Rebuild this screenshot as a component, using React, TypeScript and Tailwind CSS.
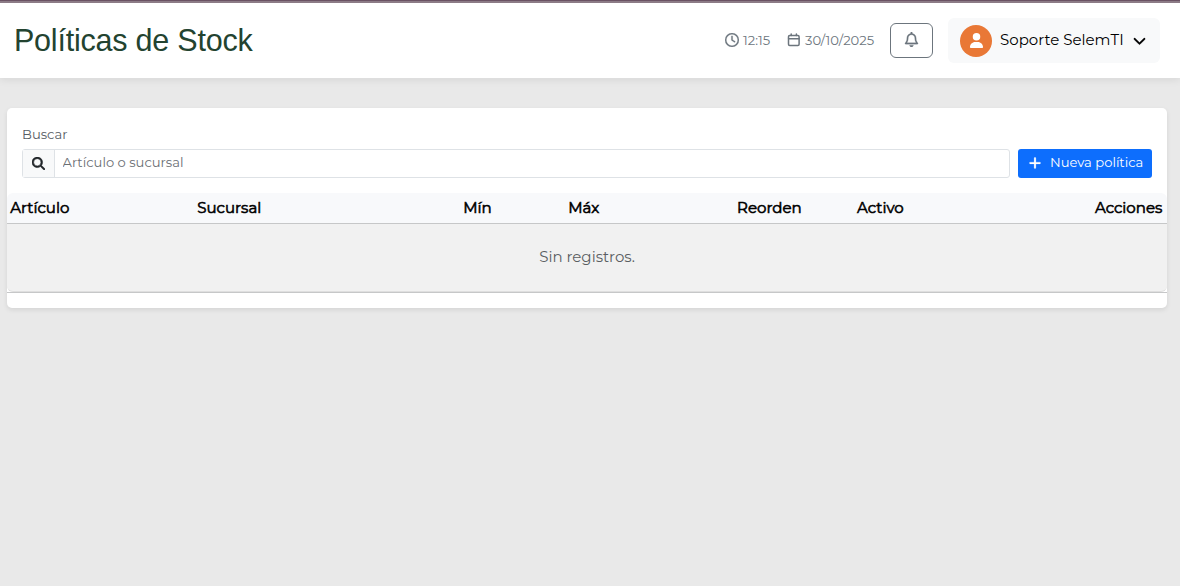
import React from "react";
import { FaRegClock, FaRegBell, FaUser, FaChevronDown, FaMagnifyingGlass, FaPlus } from "react-icons/fa6";

const columns = [
  { name: "Artículo", cell: "w-[187px]" },
  { name: "Sucursal", cell: "w-[266px]" },
  { name: "Mín", cell: "w-[105px]" },
  { name: "Máx", cell: "w-[169px]" },
  { name: "Reorden", cell: "w-[120px]" },
  { name: "Activo", cell: "w-[238px]" },
  { name: "Acciones", cell: "w-[72px]" },
];

function CalendarIcon() {
  return (
    <svg viewBox="0 0 14 14" className="mr-1 mb-px ml-4 size-3.5" fill="none" stroke="currentColor" strokeWidth="1.5" strokeLinecap="round">
      <rect x="1.5" y="2.6" width="10.6" height="9.8" rx="1.2" />
      <path d="M1.6 5.8h10.4M4.2 1v1.6M9.4 1v1.6" />
    </svg>
  );
}

function Header() {
  return (
    <header className="bg-white shadow-[0_2px_8px_rgba(0,0,0,0.08)]">
      <div className="h-[3px] border-t border-[#6a5263] bg-[#8c7b86]" />
      <div className="flex h-[75px] items-center pr-5 pl-3.5">
        <h1 className="font-['Liberation_Sans',sans-serif] text-[30.5px] leading-none font-normal tracking-[-0.22px] whitespace-nowrap text-[#234330]">Políticas de Stock</h1>
        <div className="ml-auto flex items-center text-[13.125px] text-[#6c757d]">
          <FaRegClock className="mr-1 mb-px size-3.5" stroke="currentColor" strokeWidth="8" />
          <span className="w-7 whitespace-nowrap">12:15</span>
          <CalendarIcon />
          <span className="w-[70px] whitespace-nowrap">30/10/2025</span>
          <button className="ml-[15px] flex h-[35px] w-[43px] items-center justify-center rounded-md border border-[#6c757d] pb-0.5">
            <FaRegBell className="size-[15px]" stroke="currentColor" strokeWidth="8" />
          </button>
          <button className="ml-[15px] flex h-[45px] w-[212px] items-center rounded-md bg-[#f8f9fa] px-3 text-black">
            <span className="flex size-8 items-center justify-center rounded-full bg-[#e97836] text-white">
              <FaUser className="size-[15px]" />
            </span>
            <span className="ml-2 w-[124px] pb-px text-left text-[15px] leading-[22px] whitespace-nowrap">Soporte SelemTI</span>
            <FaChevronDown className="ml-[9px] size-[13px]" stroke="currentColor" strokeWidth="12" />
          </button>
        </div>
      </div>
    </header>
  );
}

export default function App() {
  return (
    <div className="min-h-screen bg-[#e9e9e9] font-['Montserrat','Inter',sans-serif] font-normal">
      <Header />
      <main className="mt-[30px] mr-[13px] ml-[7px] h-[200px] rounded-[5px] bg-white shadow-[0_2px_5px_rgba(0,0,0,0.09)]">
        <div className="flex h-[85px] flex-col px-[15px] pt-[17px]">
          <label className="h-6 text-[13.125px] leading-[18px] text-[#565d64]">Buscar</label>
          <div className="flex gap-2">
            <div className="flex h-[29px] flex-1 rounded-[3px] border border-[#dee2e6]">
              <span className="flex w-8 items-center justify-center border-r border-[#dee2e6] bg-[#f8f9fa] pb-px text-[#212529]">
                <FaMagnifyingGlass className="size-[13px]" stroke="currentColor" strokeWidth="22" />
              </span>
              <input className="flex-1 px-[7.5px] pb-0.5 text-[13.125px] outline-none placeholder:text-[#6b6f74]" placeholder="Artículo o sucursal" />
            </div>
            <button className="flex h-[29px] w-[134px] items-center rounded-[3px] bg-[#0d6efd] pb-0.5 pl-2.5 text-[13.125px] whitespace-nowrap text-white">
              <FaPlus className="mr-2 size-3.5" stroke="currentColor" strokeWidth="8" />
              Nueva política
            </button>
          </div>
        </div>
        <div className="flex h-[31px] items-center rounded-t-md border-b border-[#c6c7c8] bg-[#f8f9fb] pl-[3.3px] text-[15px] whitespace-nowrap text-black [-webkit-text-stroke:0.6px_black]">
          {columns.map((c) => (
            <div key={c.name} className={c.cell}>{c.name}</div>
          ))}
        </div>
        <div className="border-b border-[#c6c7c8]">
          <div className="flex h-[68px] items-center justify-center rounded-b-md border-b border-[#dfdfdf] bg-[#f1f1f1] text-[15px] text-[#5a5e62]">Sin registros.</div>
        </div>
      </main>
    </div>
  );
}
